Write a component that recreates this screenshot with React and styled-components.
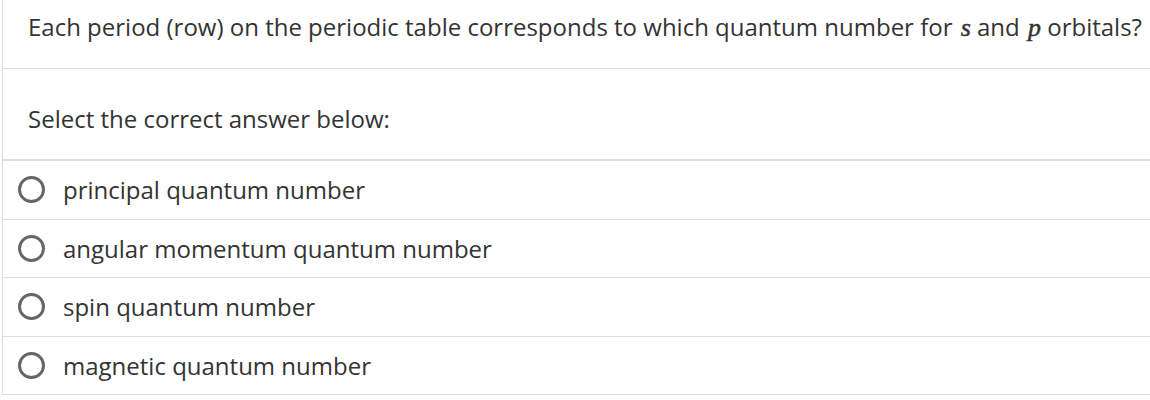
import React from 'react';
import styled, { createGlobalStyle } from 'styled-components';

const GlobalStyle = createGlobalStyle`
  html, body {
    margin: 0;
    padding: 0;
    background: #fff;
  }
  body {
    font-family: "Open Sans", "Liberation Sans", sans-serif;
    color: #333;
  }
`;

const Card = styled.div`
  margin-left: 2px;
  border-left: 1px solid #ddd;
  width: 1148px;
`;

const Question = styled.div`
  padding: 9px 0 23px 25px;
  font-size: 24px;
  line-height: 36px;
  border-bottom: 1px solid #ddd;
  white-space: nowrap;
`;

const Prompt = styled.div`
  padding: 32px 0 22px 25px;
  font-size: 24px;
  line-height: 36px;
  border-bottom: 2px solid #ddd;
`;

const MathVar = styled.span`
  display: inline-block;
  font-family: "Liberation Serif", serif;
  font-style: italic;
  font-size: 1.08em;
  line-height: 0;
  margin-left: 2px;
  -webkit-text-stroke: 0.5px #333;
`;

const Options = styled.ul`
  list-style: none;
  margin: 0;
  padding: 0;
`;

const Option = styled.li`
  display: flex;
  align-items: center;
  gap: 18px;
  padding: 11px 0 11px 15px;
  font-size: 24px;
  line-height: 35.6px;
  border-bottom: 1px solid #ddd;
`;

const Radio = styled.span`
  flex: none;
  box-sizing: border-box;
  width: 27px;
  height: 27px;
  border: 3px solid #666;
  border-radius: 50%;
`;

const answers = [
  'principal quantum number',
  'angular momentum quantum number',
  'spin quantum number',
  'magnetic quantum number'
];

export default function App() {
  return (
    <>
      <GlobalStyle />
      <Card>
        <Question>
          Each period (row) on the periodic table corresponds to which quantum number for{' '}
          <MathVar>s</MathVar> and <MathVar>p</MathVar> orbitals?
        </Question>
        <Prompt>Select the correct answer below:</Prompt>
        <Options>
          {answers.map(text => (
            <Option key={text}>
              <Radio />
              {text}
            </Option>
          ))}
        </Options>
      </Card>
    </>
  );
}
